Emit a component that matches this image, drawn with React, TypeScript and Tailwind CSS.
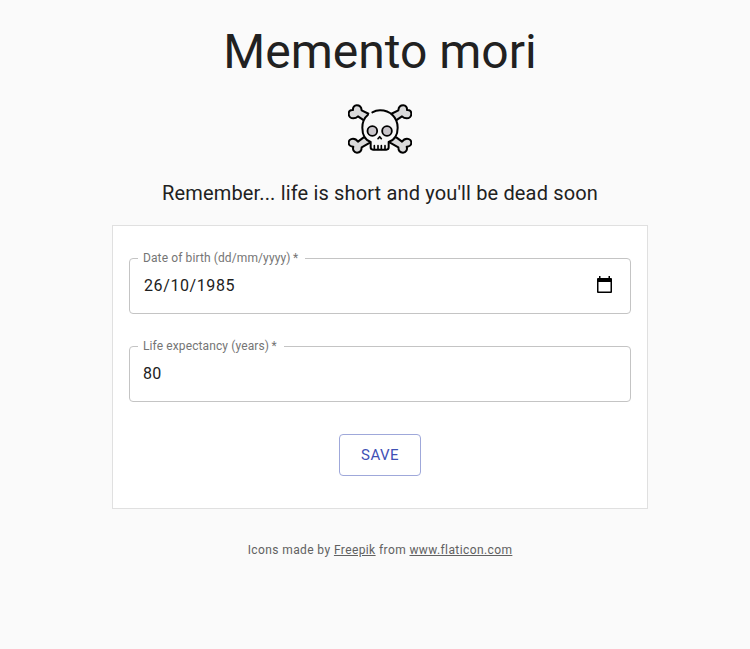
import type { ReactNode } from "react";

const bone =
  "M87 54 L65 43 C64 32 58 28 50 28 C43 28 38 34 39 42 C31 41 26 46 26 53 C26 61 32 67 40 67 C46 67 50 65 54 61 L73 74";
const lowerBone =
  "M70 125 L54 137 C50 131 45 128 39 128 C31 128 26 134 26 140 C26 147 32 152 40 152 C37 161 42 170 51 170 C60 170 65 164 65 154 L90 140";

function Skull() {
  return (
    <svg viewBox="24 3 192 192" className="block h-16 w-16" aria-hidden="true">
      <g fill="#dadadb" stroke="#000" strokeWidth="6" strokeLinejoin="round" strokeLinecap="round">
        <path d={bone} />
        <path d={bone} transform="translate(240 0) scale(-1 1)" />
        <path d={lowerBone} />
        <path d={lowerBone} transform="translate(240 0) scale(-1 1)" />
      </g>
      <path
        d="M120 43 C89 43 67 65 67 95 C67 118 76 132 92 138 V154 Q92 161 99 161 H139 Q146 161 146 154 V138 C164 132 173 118 173 95 C173 65 151 43 120 43Z"
        fill="#f7f7f7"
      />
      <path
        d="M97 49 C104 45 112 43 120 43 C151 43 173 65 173 95 C173 118 163 132 146 138 V154 Q146 161 139 161 H99 Q92 161 92 154 V138 C76 132 67 118 67 95 C67 78 73 65 84 56"
        fill="none"
        stroke="#000"
        strokeWidth="6"
        strokeLinecap="round"
        strokeLinejoin="round"
      />
      <g fill="#c9c5ca" stroke="#000" strokeWidth="5.5">
        <circle cx="97" cy="105" r="14.5" />
        <circle cx="141" cy="105" r="14.5" />
      </g>
      <path d="M114 128 L119 122 L124 128" fill="none" stroke="#000" strokeWidth="5" strokeLinecap="round" strokeLinejoin="round" />
      <path d="M103 149V160 M114 149V160 M124 149V160 M135 149V160" stroke="#000" strokeWidth="5" strokeLinecap="round" />
    </svg>
  );
}

function Field({ label, children }: { label: string; children: ReactNode }) {
  return (
    <fieldset className="-mt-2 h-16 w-full min-w-0 rounded-[4px] border border-[#c4c4c4] pl-2">
      <legend className="h-4 pr-[7px] pl-[5px] text-[12px] leading-4 tracking-[0.11px] whitespace-nowrap text-[#757575]">
        {label}
        <span>{"\u2009*"}</span>
      </legend>
      {children}
    </fieldset>
  );
}

export default function App() {
  return (
    <main className="flex min-h-screen flex-col items-center bg-[#fafafa] pt-6 pl-[10px] font-[Roboto,sans-serif] text-[#212121]">
      <h1 className="text-[48px] leading-[56px] font-normal">Memento mori</h1>
      <div className="mt-[17px]">
        <Skull />
      </div>
      <p className="mt-4 text-[20px] leading-8 tracking-[0.15px]">Remember... life is short and you'll be dead soon</p>
      <form className="mt-4 flex w-[536px] flex-col items-center gap-8 border border-[#e0e0e0] bg-white px-4 py-8">
        <Field label="Date of birth (dd/mm/yyyy)">
          <div className="flex h-[38px] items-center justify-between pr-[17px] pl-[6px] text-[16px]">
            <span className="pt-0.5 tracking-[0.6px]">26/10/1985</span>
            <svg viewBox="0 0 17 18" className="h-[18px] w-[17px]" aria-hidden="true">
              <path fill="#000" fillRule="evenodd" d="M3 0H4.5V2H12.5V0H14V2H15Q16 2 16 3V16Q16 17 15 17H2Q1 17 1 16V3Q1 2 2 2H3ZM2.5 6V15.5H14.5V6Z" />
            </svg>
          </div>
        </Field>
        <Field label="Life expectancy (years)">
          <div className="flex h-[38px] items-center pt-0.5 pl-[5px] text-[16px] tracking-[0.15px]">80</div>
        </Field>
        <button type="button" className="h-[42px] w-[82px] rounded-[4px] border border-[#9fa8da] text-[15px] leading-[26px] tracking-[0.43px] text-[#3f51b5]">
          SAVE
        </button>
      </form>
      <footer className="mt-[31px] text-[12px] leading-5 tracking-[0.4px] text-[#616161]">
        Icons made by <a className="underline">Freepik</a> from <a className="underline">www.flaticon.com</a>
      </footer>
    </main>
  );
}
